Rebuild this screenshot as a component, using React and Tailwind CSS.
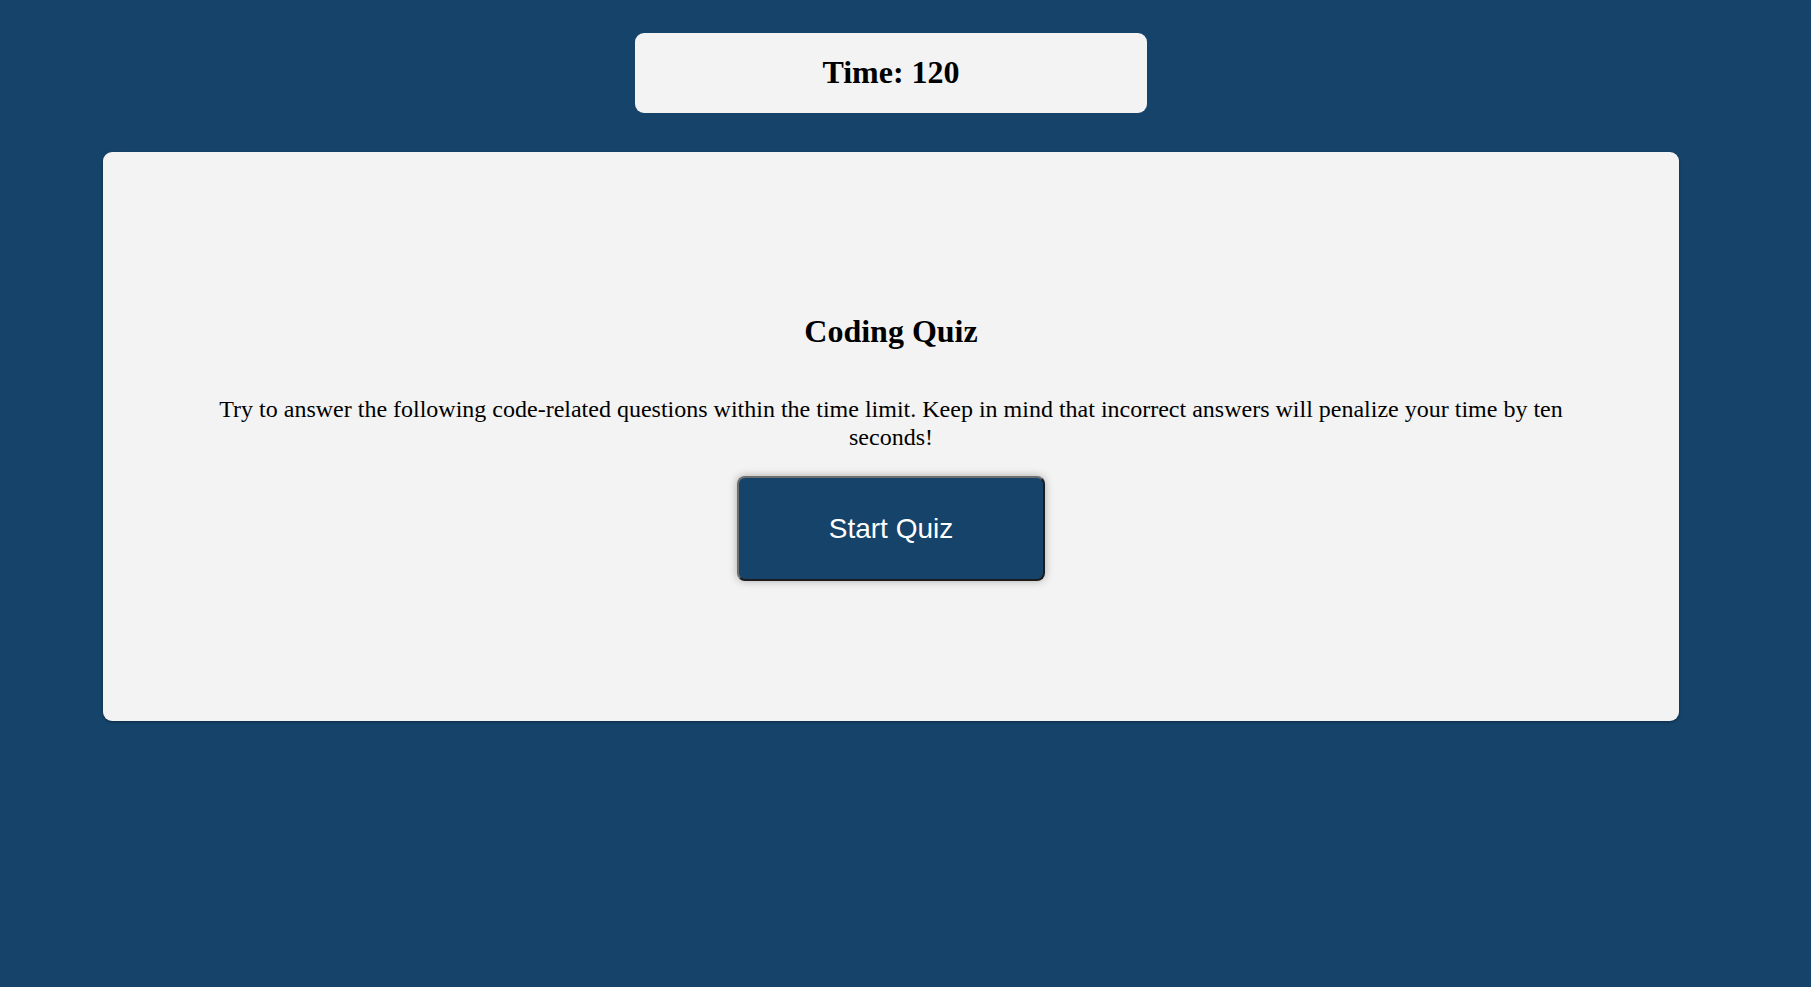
export default function App() {
  return (
    <div className="min-h-screen w-full bg-[#164369]">
      <div className="w-[1782px] flex flex-col items-center pt-[33px]">
        <div className="w-[512px] h-[80px] rounded-[9px] bg-[#f3f3f3] flex items-center justify-center pb-[2px]">
          <h2 className="text-[32px] font-bold text-black leading-[37px]" style={{ fontFamily: '"Liberation Serif", "Times New Roman", serif' }}>
            Time: 120
          </h2>
        </div>
        <div className="mt-[39px] w-[1576px] h-[569px] rounded-[9px] bg-[#f3f3f3] shadow-[0_1px_3px_rgba(0,0,0,0.35)] flex flex-col items-center pt-[161px] px-[98px]">
          <h1 className="text-[32px] font-bold text-black leading-[37px]" style={{ fontFamily: '"Liberation Serif", "Times New Roman", serif' }}>
            Coding Quiz
          </h1>
          <p className="mt-[46px] text-[24px] leading-[27.6px] text-black text-center w-full" style={{ fontFamily: '"Liberation Serif", "Times New Roman", serif' }}>
            Try to answer the following code-related questions within the time limit. Keep in mind that incorrect answers will penalize your time by ten seconds!
          </p>
          <button
            className="mt-[25px] w-[308px] h-[105px] rounded-[8px] bg-[#164369] text-white text-[28px] border-2 border-t-[#6e6e6e] border-l-[#6e6e6e] border-r-[#1c1c1c] border-b-[#1c1c1c] shadow-[0_0_8px_rgba(0,0,0,0.3)] flex items-center justify-center"
            style={{ fontFamily: '"Liberation Sans", Arial, sans-serif' }}
          >
            Start Quiz
          </button>
        </div>
      </div>
    </div>
  );
}
